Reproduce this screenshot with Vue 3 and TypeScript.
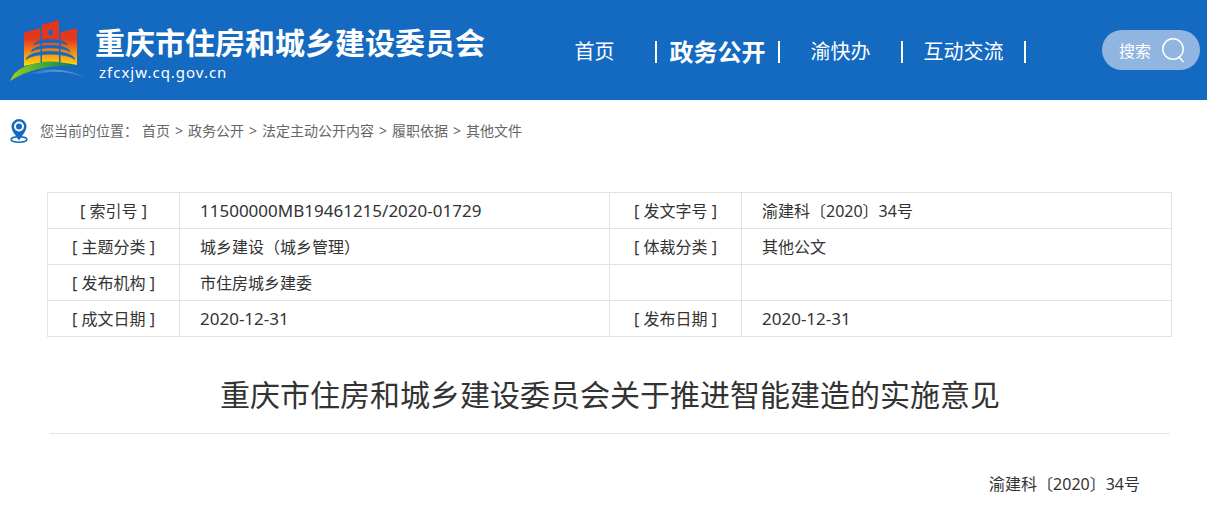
<script setup lang="ts">
interface NavItem {
  label: string
  active?: boolean
}

interface Meta {
  label: string
  value: string
}

const navItems: NavItem[] = [
  { label: '首页' },
  { label: '政务公开', active: true },
  { label: '渝快办' },
  { label: '互动交流' },
]

const crumbs: string[] = ['首页', '政务公开', '法定主动公开内容', '履职依据', '其他文件']

const rows: Meta[][] = [
  [
    { label: '[ 索引号 ]', value: '11500000MB19461215/2020-01729' },
    { label: '[ 发文字号 ]', value: '渝建科〔2020〕34号' },
  ],
  [
    { label: '[ 主题分类 ]', value: '城乡建设（城乡管理）' },
    { label: '[ 体裁分类 ]', value: '其他公文' },
  ],
  [
    { label: '[ 发布机构 ]', value: '市住房城乡建委' },
    { label: '', value: '' },
  ],
  [
    { label: '[ 成文日期 ]', value: '2020-12-31' },
    { label: '[ 发布日期 ]', value: '2020-12-31' },
  ],
]

const isCode = (value: string): boolean => /^[\w/-]+$/.test(value)
</script>

<template>
  <div class="page">
    <header class="header">
      <a class="brand" href="#">
        <svg class="emblem" width="82" height="64" viewBox="0 0 82 64" aria-hidden="true">
          <defs>
            <linearGradient id="towers" gradientUnits="userSpaceOnUse" x1="0" y1="2" x2="0" y2="48">
              <stop offset="0" stop-color="#e2341f" />
              <stop offset="0.42" stop-color="#e4391d" />
              <stop offset="0.7" stop-color="#f48c14" />
              <stop offset="1" stop-color="#ffdc08" />
            </linearGradient>
            <linearGradient id="hill" x1="0" y1="0" x2="1" y2="0">
              <stop offset="0" stop-color="#a3d01a" />
              <stop offset="0.45" stop-color="#4fae35" />
              <stop offset="1" stop-color="#0b7a6e" />
            </linearGradient>
            <linearGradient id="river" x1="0" y1="0" x2="1" y2="0">
              <stop offset="0" stop-color="#1b72cb" />
              <stop offset="0.5" stop-color="#5796d8" />
              <stop offset="0.75" stop-color="#4c86c9" />
              <stop offset="1" stop-color="#1469c0" />
            </linearGradient>
          </defs>
          <path
            d="M14 14.500 30.500 10V45Q22 46 14 48ZM32 6.500 49 2V44.500Q40 43.500 32 44.500ZM50.500 14.500 67 10V47Q59 45 50.500 44.500Z"
            fill="url(#towers)"
          />
          <ellipse cx="40.500" cy="14.500" rx="2.200" ry="3" fill="#1469c0" />
          <path
            d="M23.500 27C26 19.500 55 19.500 57.500 27C51 23.500 30 23.500 23.500 27ZM21 34C23 25 58 25 60 34C53 28.500 28 28.500 21 34ZM16 41.500C18 30.500 63 30.500 65 41.500C56 34.500 25 34.500 16 41.500Z"
            fill="#1469c0"
            stroke="#1469c0"
            stroke-width="0.500"
          />
          <path d="M0 63Q4 53 14 49Q41 38 65 49Q48 46 29 51Q12 55 0 63Z" fill="url(#hill)" />
          <path d="M16 57Q49 44 80 62Q54 50 30 55.500Q22 55 16 57Z" fill="url(#river)" />
        </svg>
        <span class="brand-text">
          <span class="brand-name">重庆市住房和城乡建设委员会</span>
          <span class="brand-url">zfcxjw.cq.gov.cn</span>
        </span>
      </a>
      <nav class="nav">
        <a
          v-for="item in navItems"
          :key="item.label"
          href="#"
          class="nav-item"
          :class="{ active: item.active }"
          >{{ item.label }}</a
        >
      </nav>
      <button class="search" type="button">
        <span>搜索</span>
        <svg width="24" height="26" viewBox="0 0 24 26" fill="none" stroke="#fff" stroke-width="1.500" aria-hidden="true">
          <circle cx="12" cy="12" r="10.200" />
          <path d="m17.500 19.500 5 5.500" />
        </svg>
      </button>
    </header>

    <nav class="crumbs" aria-label="位置">
      <svg class="pin" width="18" height="24" viewBox="0 0 18 24" aria-hidden="true">
        <ellipse cx="9" cy="20.500" rx="8" ry="2.700" fill="#fff" stroke="#1469c0" stroke-width="1.400" />
        <path
          d="M9 0a7.500 7.500 0 0 0-7.500 7.500C1.500 12 5.500 16 9 21.500 12.500 16 16.500 12 16.500 7.500A7.500 7.500 0 0 0 9 0Z"
          fill="#1469c0"
        />
        <circle cx="9" cy="7.500" r="4" fill="none" stroke="#fff" stroke-width="2" />
      </svg>
      <span class="crumb-label">您当前的位置：</span>
      <template v-for="(crumb, i) in crumbs" :key="crumb">
        <span v-if="i > 0" class="sep">&gt;</span>
        <a href="#">{{ crumb }}</a>
      </template>
    </nav>

    <main class="article">
      <table class="meta">
        <tbody>
          <tr v-for="(row, r) in rows" :key="r">
            <template v-for="(cell, c) in row" :key="c">
              <th scope="row">{{ cell.label }}</th>
              <td :class="{ code: isCode(cell.value) }">{{ cell.value }}</td>
            </template>
          </tr>
        </tbody>
      </table>
      <h1 class="title">重庆市住房和城乡建设委员会关于推进智能建造的实施意见</h1>
      <p class="doc-number">渝建科〔2020〕34号</p>
    </main>
  </div>
</template>

<style>
body {
  margin: 0;
  background: #fff;
}
</style>

<style scoped>
.page {
  font-family: 'Noto Sans', 'Noto Sans CJK SC', sans-serif;
  color: #333;
}

a {
  color: inherit;
  text-decoration: none;
}

.header {
  display: flex;
  align-items: center;
  box-sizing: border-box;
  height: 100px;
  padding: 0 7px 0 10px;
  background: #1469c0;
  color: #fff;
  white-space: nowrap;
}

.brand {
  display: flex;
  align-items: center;
  gap: 3px;
}

.emblem {
  display: block;
}

.brand-text {
  display: flex;
  flex-direction: column;
  padding-top: 8px;
}

.brand-name {
  font-family: 'Liberation Sans', 'Noto Sans CJK SC', sans-serif;
  font-size: 30px;
  font-weight: 700;
  line-height: 36px;
}

.brand-url {
  padding-left: 4px;
  font-size: 15px;
  line-height: 20px;
  letter-spacing: 1px;
}

.nav {
  display: grid;
  grid-template-columns: repeat(4, 123px);
  margin-left: 49px;
  padding-top: 4px;
}

.nav-item {
  border-right: 2px solid #fff;
  font-size: 20px;
  line-height: 22px;
  text-align: center;
}

.nav-item.active {
  font-size: 24px;
  font-weight: 700;
}

.search {
  display: flex;
  align-items: center;
  justify-content: space-between;
  width: 98px;
  height: 40px;
  margin-left: auto;
  padding: 0 15px 0 17px;
  border: 0;
  border-radius: 20px;
  background: #8fb5e0;
  color: #fff;
  font-family: inherit;
  font-size: 16px;
}

.crumbs {
  display: flex;
  align-items: center;
  padding: 19px 10px 0;
  font-size: 14px;
  line-height: 24px;
  color: #666;
}

.pin {
  margin-right: 12px;
}

.crumb-label {
  margin-right: 4px;
}

.sep {
  margin: 0 5px;
}

.article {
  margin: 49px 35px 0 47px;
}

.meta {
  width: 100%;
  border-collapse: collapse;
  table-layout: fixed;
  font-size: 16px;
  line-height: 33px;
}

.meta th,
.meta td {
  height: 33px;
  padding: 2px 0 0;
  border: 1px solid #e2e2e2;
}

.meta th {
  width: 131px;
  font-weight: 400;
}

.meta td {
  padding-left: 20px;
}

.meta .code {
  padding-top: 0;
  font-size: 17px;
  line-height: 35px;
}

.title {
  margin: 36px 2px 0 3px;
  padding-bottom: 16px;
  border-bottom: 1px solid #e2e2e2;
  font-size: 30px;
  font-weight: 400;
  line-height: 44px;
  text-align: center;
}

.doc-number {
  margin: 36px 32px 0 0;
  font-size: 16px;
  line-height: 28px;
  text-align: right;
}
</style>
